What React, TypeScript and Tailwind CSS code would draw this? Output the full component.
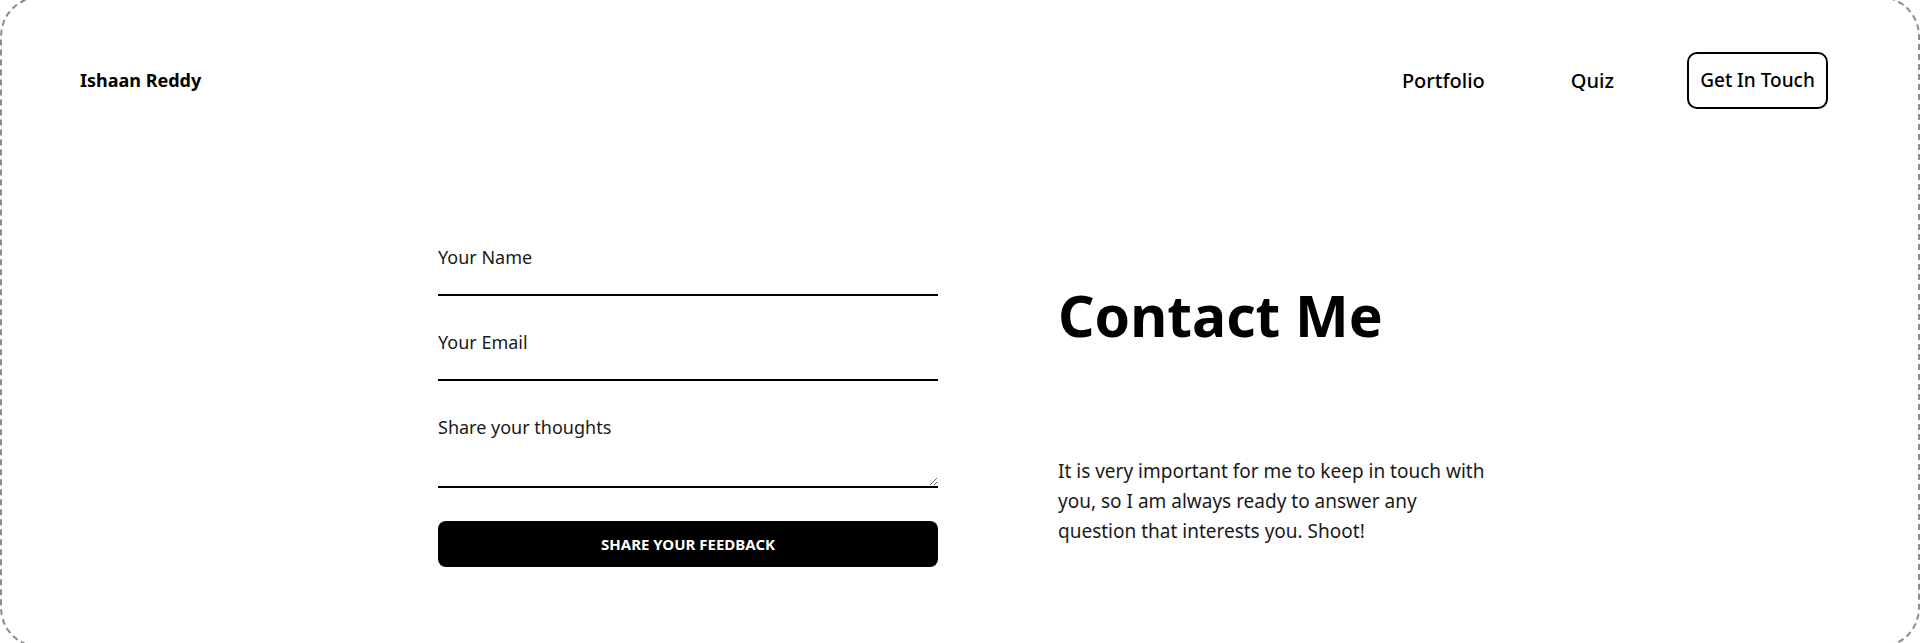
import { useState } from "react";

const NavLink = ({ label }: { label: string }) => (
  <a href="#" className="text-[20px] font-medium leading-[28px] text-black">
    {label}
  </a>
);

const Field = ({ placeholder }: { placeholder: string }) => (
  <input
    type="text"
    placeholder={placeholder}
    className="w-full bg-transparent pt-0 pb-[23px] text-[18px] leading-[27px] text-black placeholder:text-[#1a1a1a] border-b-2 border-black outline-none"
  />
);

export default function App() {
  const [name, setName] = useState("");

  return (
    <div
      className="min-h-screen overflow-hidden bg-white"
      style={{ fontFamily: '"Noto Sans", "Open Sans", sans-serif' }}
    >
      <div className="-mt-[4px] h-[652px] rounded-[40px] border-2 border-dashed border-[#8c8c8c]">
        <header className="flex items-center justify-between pt-[54px] pl-[78px] pr-[90px]">
          <span className="text-[18px] font-bold text-black">Ishaan Reddy</span>
          <nav className="flex items-center">
            <NavLink label="Portfolio" />
            <span className="ml-[86px]">
              <NavLink label="Quiz" />
            </span>
            <button className="ml-[73px] h-[57px] w-[141px] rounded-[10px] border-2 border-black text-[19px] font-medium text-black">
              Get In Touch
            </button>
          </nav>
        </header>

        <main className="flex items-start pt-[135px] pl-[436px]">
          <form
            className="flex w-[500px] flex-col"
            onSubmit={(e) => e.preventDefault()}
          >
            <input
              type="text"
              value={name}
              onChange={(e) => setName(e.target.value)}
              placeholder="Your Name"
              className="w-full bg-transparent pt-0 pb-[23px] text-[18px] leading-[27px] text-black placeholder:text-[#1a1a1a] border-b-2 border-black outline-none"
            />
            <div className="mt-[33px]">
              <Field placeholder="Your Email" />
            </div>
            <textarea
              rows={2}
              placeholder="Share your thoughts"
              className="mt-[33px] w-full bg-transparent pt-0 pb-[18px] text-[18px] leading-[27px] text-black placeholder:text-[#1a1a1a] border-b-2 border-black outline-none"
            />
            <button
              type="submit"
              className="mt-[33px] h-[46px] w-full rounded-[8px] bg-black text-[15px] font-bold uppercase text-white"
            >
              Share your feedback
            </button>
          </form>

          <section className="ml-[120px] mt-[34px] flex flex-col">
            <h1 className="text-[57px] font-bold leading-[74px] text-black">
              Contact Me
            </h1>
            <p className="mt-[104px] text-[19px] leading-[30px] text-[#1a1a1a]">
              It is very important for me to keep in touch with
              <br />
              you, so I am always ready to answer any
              <br />
              question that interests you. Shoot!
            </p>
          </section>
        </main>
      </div>
    </div>
  );
}
